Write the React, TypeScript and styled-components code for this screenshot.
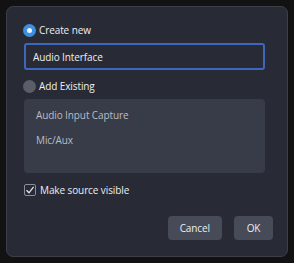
import React, { useState } from 'react';
import styled, { createGlobalStyle } from 'styled-components';

const GlobalStyle = createGlobalStyle`
  html, body {
    margin: 0;
    padding: 0;
    background: #121212;
  }
  body {
    font-family: "Open Sans", "Noto Sans", sans-serif;
  }
`;

const sources = ['Audio Input Capture', 'Mic/Aux'];

const App: React.FC = () => {
  const [mode, setMode] = useState<'new' | 'existing'>('new');
  const [name, setName] = useState('Audio Interface');
  const [visible, setVisible] = useState(true);

  return (
    <>
      <GlobalStyle />
      <Screen>
        <Dialog>
          <RadioRow onClick={() => setMode('new')}>
            <Radio checked={mode === 'new'} />
            <Label>Create new</Label>
          </RadioRow>
          <NameInput value={name} onChange={e => setName(e.target.value)} />
          <RadioRow onClick={() => setMode('existing')}>
            <Radio checked={mode === 'existing'} />
            <Label>Add Existing</Label>
          </RadioRow>
          <SourceList>
            {sources.map(s => (
              <SourceItem key={s}>{s}</SourceItem>
            ))}
          </SourceList>
          <CheckRow onClick={() => setVisible(!visible)}>
            <CheckBox>
              {visible && (
                <svg width="10" height="10" viewBox="0 0 10 10">
                  <path
                    d="M1.5 5.2 L4 7.8 L8.6 1.8"
                    fill="none"
                    stroke="#e4e6ea"
                    strokeWidth="1.3"
                  />
                </svg>
              )}
            </CheckBox>
            <Label>Make source visible</Label>
          </CheckRow>
          <Footer>
            <Button>Cancel</Button>
            <Button>OK</Button>
          </Footer>
        </Dialog>
      </Screen>
    </>
  );
};

export default App;

const Screen = styled.div`
  width: 294px;
  height: 263px;
  padding: 6px 0 0 6px;
  box-sizing: border-box;
`;

const Dialog = styled.div`
  width: 282px;
  height: 251px;
  box-sizing: border-box;
  background: #282b35;
  border: 1px solid #3c3f48;
  border-radius: 7px;
  padding: 15px 22px 0 16px;
  display: flex;
  flex-direction: column;
`;

const RadioRow = styled.div`
  display: flex;
  align-items: center;
  gap: 3px;
  height: 16px;
  cursor: pointer;
`;

const Radio = styled.span<{ checked: boolean }>`
  width: 13px;
  height: 13px;
  border-radius: 50%;
  box-sizing: border-box;
  background: ${({ checked }) => (checked ? '#3d8fe2' : '#5b5e67')};
  position: relative;

  &::after {
    content: '';
    display: ${({ checked }) => (checked ? 'block' : 'none')};
    position: absolute;
    left: 4px;
    top: 4px;
    width: 5px;
    height: 5px;
    border-radius: 50%;
    background: #eef4fc;
  }
`;

const Label = styled.span`
  color: #eceef2;
  font-size: 10px;
  letter-spacing: -0.1px;
`;

const NameInput = styled.input`
  margin-top: 5px;
  margin-bottom: 8px;
  margin-left: 1px;
  height: 27px;
  width: 241px;
  box-sizing: border-box;
  background: #282b35;
  border: 2px solid #3e66bd;
  border-radius: 3px;
  color: #eceef2;
  font-family: inherit;
  font-size: 10px;
  letter-spacing: -0.1px;
  padding: 0 7px;
  outline: none;
`;

const SourceList = styled.div`
  margin-top: 5px;
  margin-left: 1px;
  width: 241px;
  height: 74px;
  background: #383c48;
  border-radius: 4px;
  padding: 8px 12px;
  box-sizing: border-box;
  display: flex;
  flex-direction: column;
  gap: 9px;
`;

const SourceItem = styled.div`
  color: #b9bcc4;
  font-size: 10px;
  letter-spacing: -0.1px;
  height: 16px;
  line-height: 16px;
`;

const CheckRow = styled.div`
  margin-top: 9px;
  margin-left: 1px;
  display: flex;
  align-items: center;
  gap: 4px;
  height: 16px;
  cursor: pointer;
`;

const CheckBox = styled.span`
  width: 12px;
  height: 12px;
  box-sizing: border-box;
  border: 1px solid #8b8e96;
  border-radius: 2px;
  display: flex;
  align-items: center;
  justify-content: center;
`;

const Footer = styled.div`
  margin-top: 18px;
  display: flex;
  justify-content: flex-end;
  gap: 12px;
  width: 250px;
`;

const Button = styled.button`
  height: 24px;
  min-width: 39px;
  padding: 0 12px;
  background: #474b58;
  border: none;
  border-radius: 4px;
  color: #eceef2;
  font-family: inherit;
  font-size: 10px;
  letter-spacing: -0.1px;
`;
